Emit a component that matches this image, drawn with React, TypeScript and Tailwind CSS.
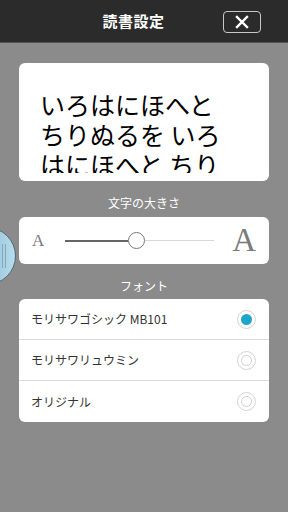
import React from "react";

const jp = { fontFamily: '"Noto Sans CJK JP", "Noto Sans", sans-serif' };

function Radio({ on }: { on?: boolean }) {
  return (
    <div className="w-[19px] h-[19px] rounded-full border border-[#d4d4d4] flex items-center justify-center bg-white">
      {on ? (
        <div className="w-[11px] h-[11px] rounded-full bg-[#1ea5c9]" />
      ) : (
        <div className="w-[11px] h-[11px] rounded-full border border-[#cfcfcf]" />
      )}
    </div>
  );
}

export default function App() {
  const fonts = [
    { name: "モリサワゴシック MB101", on: true },
    { name: "モリサワリュウミン", on: false },
    { name: "オリジナル", on: false },
  ];
  return (
    <div className="w-[288px] h-[512px] bg-[#8b8b8b] relative overflow-hidden" style={jp}>
      {/* header */}
      <div className="h-[43px] bg-[#2b2b2b] border-b border-[#555] flex items-center relative">
        <div className="w-full text-center pr-[21px] text-white text-[15px] font-bold tracking-[0.5px]">読書設定</div>
        <div className="absolute left-[223px] top-[11px] w-[38px] h-[22px] rounded-[4px] border border-[#c8c8c8] flex items-center justify-center">
          <svg width="14" height="14" viewBox="0 0 14 14">
            <path d="M2 2 L12 12 M12 2 L2 12" stroke="#fff" strokeWidth="2.4" strokeLinecap="square" />
          </svg>
        </div>
      </div>

      <div className="px-[19px] pt-[20px] flex flex-col">
        {/* preview */}
        <div className="h-[118px] bg-white rounded-[6px] pt-[26px] px-[21px]">
          <div className="h-[84px] overflow-hidden text-[25px] leading-[30px] text-black whitespace-pre-wrap">
            {"いろはにほへと\nちりぬるを いろ\nはにほへと ちり"}
          </div>
        </div>

        <div className="text-center text-white text-[12px] leading-[16px] mt-[14px]">文字の大きさ</div>

        {/* slider */}
        <div className="mt-[6px] h-[47px] bg-white rounded-[6px] flex items-center px-[13px]">
          <span className="text-[#7a7a7a] text-[17px] leading-none w-[20px]" style={{ fontFamily: '"Liberation Serif", serif' }}>A</span>
          <div className="relative ml-[13px] w-[149px] h-[17px] flex items-center">
            <div className="absolute left-0 w-[63px] h-[2px] bg-[#666]" />
            <div className="absolute left-[63px] right-0 h-[1px] bg-[#d8d8d8]" />
            <div className="absolute left-[63px] w-[17px] h-[17px] rounded-full bg-white border border-[#777]" />
          </div>
          <span className="ml-auto text-[#7a7a7a] text-[33px] leading-none" style={{ fontFamily: '"Liberation Serif", serif' }}>A</span>
        </div>

        <div className="text-center text-white text-[12px] leading-[16px] mt-[14px]">フォント</div>

        {/* fonts */}
        <div className="mt-[5px] bg-white rounded-[6px] flex flex-col">
          {fonts.map((f, i) => (
            <div
              key={f.name}
              className={`h-[41px] flex items-center pl-[12px] pr-[13px] ${i < 2 ? "border-b border-[#dcdcdc]" : ""}`}
            >
              <span className="text-[12px] text-[#333]">{f.name}</span>
              <div className="ml-auto">
                <Radio on={f.on} />
              </div>
            </div>
          ))}
        </div>
      </div>

      {/* side handle */}
      <div className="absolute left-[-42px] top-[227px] w-[58px] h-[58px] rounded-full border border-[#4a6a80] bg-gradient-to-r from-[#6fa9c6] to-[#b9dcea] flex items-center justify-end pr-[9px]">
        <div className="flex gap-[2px]">
          <div className="w-[1px] h-[24px] bg-[#7fa9bf]" />
          <div className="w-[1px] h-[24px] bg-[#7fa9bf]" />
        </div>
      </div>
    </div>
  );
}
